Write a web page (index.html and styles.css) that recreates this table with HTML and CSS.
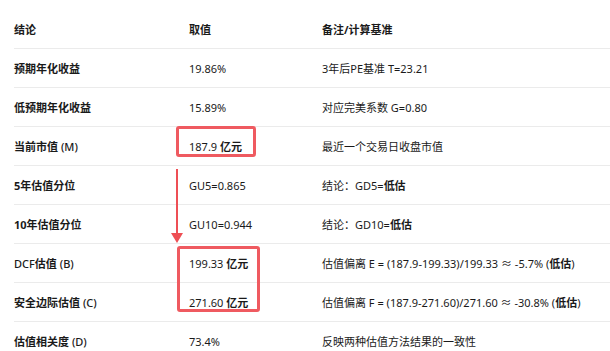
FILE: index.html
```html
<!DOCTYPE html>
<html lang="zh">
<head>
<meta charset="utf-8">
<link rel="stylesheet" href="styles.css">
</head>
<body>
<div class="wrap">
  <table class="tbl">
    <thead>
      <tr><th class="c1">结论</th><th class="c2">取值</th><th class="c3">备注/计算基准</th></tr>
    </thead>
    <tbody>
      <tr><td class="c1 b">预期年化收益</td><td class="c2">19.86%</td><td class="c3">3年后PE基准 T=23.21</td></tr>
      <tr><td class="c1 b">低预期年化收益</td><td class="c2">15.89%</td><td class="c3">对应完美系数 G=0.80</td></tr>
      <tr><td class="c1 b">当前市值 <span class="lt">(M)</span></td><td class="c2">187.9 <b>亿元</b></td><td class="c3">最近一个交易日收盘市值</td></tr>
      <tr><td class="c1 b">5年估值分位</td><td class="c2">GU5=0.865</td><td class="c3">结论：GD5=<b>低估</b></td></tr>
      <tr><td class="c1 b">10年估值分位</td><td class="c2">GU10=0.944</td><td class="c3">结论：GD10=<b>低估</b></td></tr>
      <tr><td class="c1 b"><span class="lt">DCF</span>估值 <span class="lt">(B)</span></td><td class="c2">199.33 <b>亿元</b></td><td class="c3">估值偏离 E = (187.9-199.33)/199.33 ≈ -5.7% (<b>低估</b>)</td></tr>
      <tr><td class="c1 b">安全边际估值 <span class="lt">(C)</span></td><td class="c2">271.60 <b>亿元</b></td><td class="c3">估值偏离 F = (187.9-271.60)/271.60 ≈ -30.8% (<b>低估</b>)</td></tr>
      <tr><td class="c1 b">估值相关度 <span class="lt">(D)</span></td><td class="c2">73.4%</td><td class="c3">反映两种估值方法结果的一致性</td></tr>
    </tbody>
  </table>
  <div class="mark mark-m"></div>
  <div class="mark mark-bc"></div>
  <svg class="arrow" width="16" height="80" viewBox="0 0 16 80">
    <line x1="8" y1="0" x2="8" y2="70" stroke="#ee4f55" stroke-width="2"/>
    <polygon points="2,64 14,64 8,74" fill="#ee4f55"/>
  </svg>
</div>
</body>
</html>
```
FILE: styles.css
```css
html, body {
  margin: 0;
  padding: 0;
  background: #ffffff;
}
body {
  font-family: "Noto Sans", "Noto Sans CJK SC", sans-serif;
  font-size: 11px;
  color: #1a1a1a;
}
.wrap {
  position: relative;
  padding: 10px 0 0 14px;
}
.tbl {
  border-collapse: collapse;
  width: 596px;
  table-layout: fixed;
}
.tbl th, .tbl td {
  text-align: left;
  padding: 0;
  height: 38px;
  vertical-align: middle;
  white-space: nowrap;
}
.tbl th {
  font-weight: 700;
  border-bottom: 1px solid #ebebeb;
}
.tbl td {
  border-bottom: 1px solid #ebebeb;
}
.tbl tbody tr:last-child td {
  border-bottom: none;
}
.c1 { width: 175px; }
.c2 { width: 133px; }
.b { font-weight: 700; }
.lt { font-weight: 500; }
b { font-weight: 700; }
.mark {
  position: absolute;
  border: 3px solid #ef5a60;
  border-radius: 3px;
  box-sizing: border-box;
}
.mark-m {
  left: 176px;
  top: 126px;
  width: 80px;
  height: 31px;
}
.mark-bc {
  left: 177px;
  top: 246px;
  width: 83px;
  height: 66px;
}
.arrow {
  position: absolute;
  left: 169px;
  top: 169px;
}
```
